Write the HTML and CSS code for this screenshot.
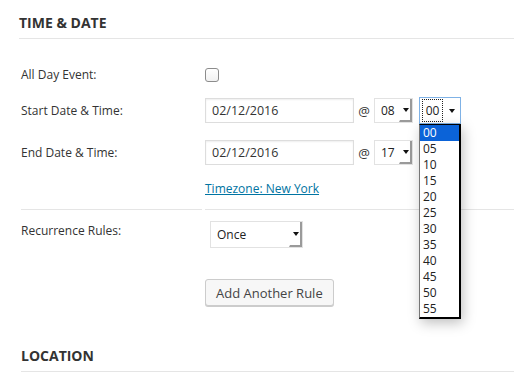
FILE: index.html
```html
<!DOCTYPE html>
<html lang="en">
<head>
  <meta charset="UTF-8" />
  <title>Event Settings - Time &amp; Date</title>
  <link rel="stylesheet" href="styles.css">
</head>
<body>
  <main class="panel">
    <section class="box">
      <h2 class="box-title">Time &amp; Date</h2>

      <div class="row row-allday">
        <label class="row-label">All Day Event:</label>
        <div class="row-field"><span class="checkbox"></span></div>
      </div>

      <div class="row row-start">
        <label class="row-label">Start Date &amp; Time:</label>
        <div class="row-field">
          <input type="text" class="date-input" value="02/12/2016">
          <span class="at">@</span>
          <div class="select select-hour">
            <span class="select-text">08</span>
            <span class="select-arrow"></span>
          </div>
          <div class="select select-min is-focused">
            <span class="select-text"><span class="focus-ring">00</span></span>
            <span class="select-arrow"></span>
            <!-- open dropdown list -->
            <ul class="dropdown">
              <li class="active">00</li>
              <li>05</li>
              <li>10</li>
              <li>15</li>
              <li>20</li>
              <li>25</li>
              <li>30</li>
              <li>35</li>
              <li>40</li>
              <li>45</li>
              <li>50</li>
              <li>55</li>
            </ul>
          </div>
        </div>
      </div>

      <div class="row row-end">
        <label class="row-label">End Date &amp; Time:</label>
        <div class="row-field">
          <input type="text" class="date-input" value="02/12/2016">
          <span class="at">@</span>
          <div class="select select-hour">
            <span class="select-text">17</span>
            <span class="select-arrow"></span>
          </div>
        </div>
      </div>

      <div class="row row-tz">
        <div class="row-label"></div>
        <div class="row-field"><a href="#" class="tz-link">Timezone: New York</a></div>
      </div>

      <div class="row row-recur">
        <label class="row-label">Recurrence Rules:</label>
        <div class="row-field">
          <div class="select select-recur">
            <span class="select-text">Once</span>
            <span class="select-arrow"></span>
          </div>
        </div>
      </div>

      <div class="row row-btn">
        <div class="row-label"></div>
        <div class="row-field"><button class="btn">Add Another Rule</button></div>
      </div>
    </section>

    <section class="box box-location">
      <h2 class="box-title">Location</h2>
    </section>
  </main>
</body>
</html>
```

FILE: styles.css
```css
:root {
  --text: #333;
  --line: #e5e5e5;
  --field-border: #ddd;
  --link: #0074a2;
  --highlight: #0b63d8;
}

* {
  box-sizing: border-box;
}

body, html {
  margin: 0;
  background: #fff;
  font-family: 'Open Sans', 'Liberation Sans', sans-serif;
  font-size: 12px;
  color: var(--text);
}

.panel {
  padding: 0 1px 0 19px;
}

.box-title {
  margin: 0;
  padding: 13px 0 5px;
  font-size: 14px;
  line-height: 20px;
  font-weight: 700;
  text-transform: uppercase;
  color: #333;
  border-bottom: 1px solid var(--line);
}

.row {
  display: grid;
  grid-template-columns: 181px 1fr;
  column-gap: 3px;
  align-items: center;
  padding-left: 2px;
}

.row-label {
  font-size: 12px;
  line-height: 18px;
}

.row-field {
  display: flex;
  align-items: center;
}

.row-allday { margin-top: 23px; height: 25px; }
.row-start  { margin-top: 11px; }
.row-end    { margin-top: 17px; }

.row-tz {
  margin-top: 15px;
  align-items: stretch;
}

.row-tz > div {
  padding-bottom: 11px;
  border-bottom: 1px solid var(--line);
  line-height: 18px;
}

.row-recur {
  margin-top: 9px;
  align-items: start;
}

.row-recur .row-label {
  padding-top: 3px;
}

.row-recur .select {
  margin-top: 2px;
  margin-left: 5px;
}

.row-btn { margin-top: 31px; }

.checkbox {
  display: block;
  width: 14px;
  height: 14px;
  border: 1px solid #8c8c8c;
  border-radius: 3px;
  background: linear-gradient(#fff, #f1f1f1);
  margin-top: 1px;
}

.date-input {
  width: 149px;
  height: 25px;
  padding: 0 6px;
  border: 1px solid var(--field-border);
  box-shadow: inset 0 1px 2px rgba(0,0,0,0.07);
  font-family: inherit;
  font-size: 12.5px;
  color: var(--text);
  background: #fff;
  outline: none;
}

.at {
  width: 20px;
  text-align: center;
  font-size: 13px;
  color: #333;
}

.select {
  position: relative;
  display: flex;
  align-items: stretch;
  height: 25px;
  border: 1px solid #e2e2e2;
  background: #fff;
  font-size: 12px;
  color: #222;
}

.select-hour { width: 39px; margin-right: 6px; }
.select-recur { width: 93px; height: 27px; }

.select-text {
  flex: 1;
  display: flex;
  align-items: center;
  padding-left: 6px;
}

.select-arrow {
  position: relative;
  width: 13px;
  background: #fff;
  border-right: 2px solid #9a9a9a;
  border-bottom: 2px solid #9a9a9a;
  border-left: 1px solid #fff;
}

.select-arrow::after {
  content: "";
  position: absolute;
  left: 3px;
  top: 50%;
  margin-top: -2px;
  border-left: 3px solid transparent;
  border-right: 3px solid transparent;
  border-top: 4px solid #111;
}

.select-min {
  width: 42px;
  height: 27px;
  margin-top: -1px;
  margin-bottom: -1px;
  border-color: #7fb2e6;
}

.select-min .select-text {
  padding: 1px 0 1px 2px;
  align-items: stretch;
}

.focus-ring {
  display: flex;
  align-items: center;
  justify-content: center;
  width: 21px;
  border: 1px dotted #222;
}

.select-min .select-arrow {
  width: 17px;
  border-right: none;
  border-bottom: none;
}

.select-min .select-arrow::after {
  left: 5px;
}

.dropdown {
  position: absolute;
  left: -1px;
  top: calc(100% + 1px);
  width: 42px;
  margin: 0;
  padding: 0;
  list-style: none;
  background: #fff;
  border: 1px solid #000;
  border-left-color: #777;
  border-right-width: 2px;
  border-bottom-width: 2px;
  box-shadow: 2px 4px 12px rgba(0,0,0,0.25);
  z-index: 10;
}

.dropdown li {
  height: 16px;
  line-height: 16px;
  padding-left: 3px;
  font-size: 12px;
  color: #222;
}

.dropdown li.active {
  background: var(--highlight);
  color: #fff;
}

.tz-link {
  color: var(--link);
  text-decoration: underline;
  font-size: 12px;
}

.btn {
  height: 27px;
  padding: 0 10px;
  border: 1px solid #ccc;
  border-radius: 3px;
  background: #f7f7f7;
  box-shadow: 0 1px 0 #ccc;
  font-family: inherit;
  font-size: 13px;
  color: #444;
  cursor: pointer;
}

.box-location {
  margin-top: 27px;
  padding-left: 2px;
}
```
